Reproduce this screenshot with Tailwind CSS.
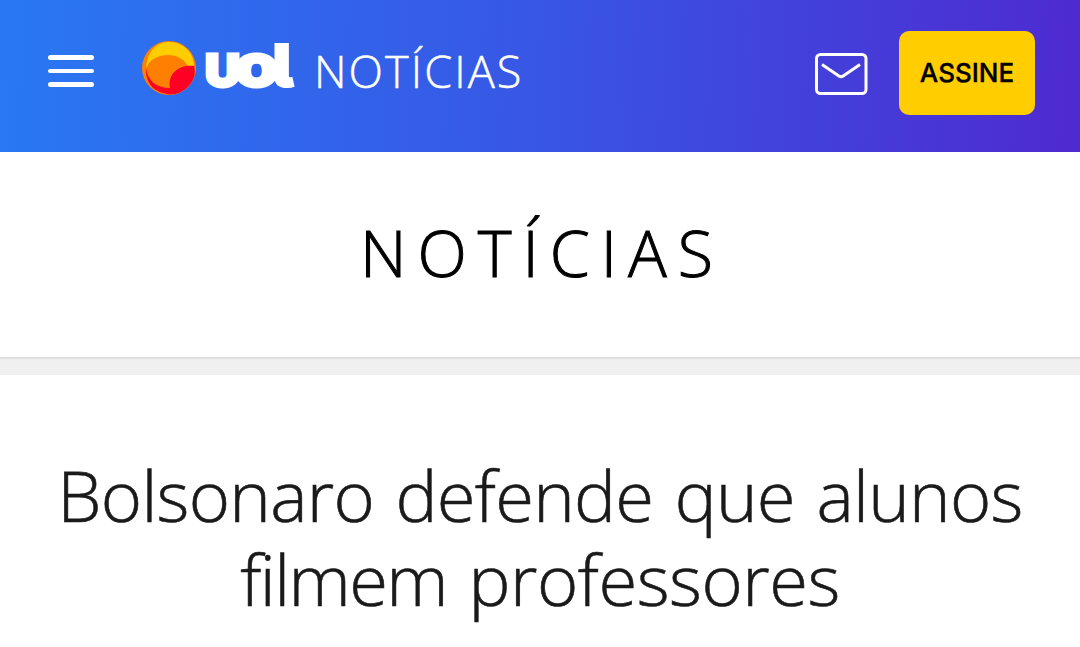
<!DOCTYPE html>
<html lang="pt-BR">
<head>
<meta charset="utf-8">
<title>UOL Notícias</title>
<script src="https://cdn.jsdelivr.net/npm/@tailwindcss/browser@4"></script>
</head>
<body class="bg-white w-[1080px] h-[647px] overflow-hidden font-['Open_Sans',sans-serif]">
<header class="h-[152px] bg-linear-[92deg,#2978f3_0%,#3758e5_48%,#4e2ad0_100%] flex items-start">
  <button aria-label="Menu" class="ml-12 mt-[55px] w-[46px] flex flex-col gap-[9px]">
    <span class="h-[4.5px] rounded-full bg-white"></span>
    <span class="h-[4.5px] rounded-full bg-white"></span>
    <span class="h-[4.5px] rounded-full bg-white"></span>
  </button>
  <svg class="ml-12 mt-[30px] w-[156px] h-[80px] shrink-0 overflow-visible" viewBox="142 30 156 80" role="img" aria-label="UOL">
    <defs><clipPath id="ball"><circle cx="169" cy="68" r="27"/></clipPath></defs>
    <circle cx="169" cy="68" r="27" fill="#ff8000"/>
    <g clip-path="url(#ball)">
      <path d="M146 68C147 52 156 42 169 42C184 42 194 53 194 66L188 66C184 59 177 55 168 55C158 55 149 60 146 68Z" fill="#ffcd00"/>
      <path d="M146 68C148 82 157 88 170 88C167 74 179 64 194 66Q197 78 188 87Q180 95 169 94.500Q145 91 146 68Z" fill="#ff0025"/>
    </g>
    <g fill="#fff" stroke="#fff" font-family="Inter" font-weight="900" stroke-linejoin="miter">
      <text x="205" y="87" class="uppercase" font-size="46" textLength="35" lengthAdjust="spacingAndGlyphs" stroke-width="3">u</text>
      <text x="235.500" y="85.500" font-size="59" textLength="42" lengthAdjust="spacingAndGlyphs" stroke-width="5" font-family="Lato">o</text>
      <text x="272.500" y="87" font-size="59" textLength="21" lengthAdjust="spacingAndGlyphs" stroke-width="2" style="font-feature-settings:'cv05' 1">l</text>
    </g>
  </svg>
  <span class="ml-4 mt-[41px] text-[45px] leading-[60px] font-light text-white tracking-[2.1px] [-webkit-text-stroke:0.5px_white] whitespace-nowrap">NOTÍCIAS</span>
  <svg class="ml-auto mt-[52px] w-[54px] h-[44px] shrink-0" viewBox="0 0 54 44" fill="none" stroke="#fff" stroke-width="3" aria-label="E-mail">
    <rect x="2.500" y="2.500" width="49.500" height="39" rx="4"/>
    <path d="M8 12.500L24.500 23.700Q27 25.500 29.500 23.700L46 12.500" stroke-linejoin="round"/>
  </svg>
  <a class="ml-[31px] mr-[45px] mt-[31px] w-[136px] h-[84px] rounded-[10px] bg-[#ffcd00] flex items-center justify-center text-black text-[26px] font-medium font-['Inter',sans-serif] pb-0.5 [-webkit-text-stroke:0.3px_black]">ASSINE</a>
</header>
<div class="h-[205px] flex justify-center">
  <h2 class="ml-[4px] mt-[55px] text-[64.5px] leading-[90px] font-light text-black tracking-[11px] [-webkit-text-stroke:1px_black] whitespace-nowrap">NOTÍCIAS</h2>
</div>
<div class="h-[18px] bg-[#f0f0f0] border-t-2 border-[#dfdfdf]"></div>
<h1 class="mt-[78px] text-center text-[70.5px] leading-[84px] font-light text-[#1a1a1a] tracking-[-0.75px] [word-spacing:4px] [-webkit-text-stroke:0.6px_#1a1a1a] whitespace-nowrap">
  <span class="block">Bolsonaro defende que alunos</span>
  <span class="block"><span class="tracking-[-1.6px]">filmem</span> <span class="tracking-[-0.5px]">professores</span></span>
</h1>
</body>
</html>
